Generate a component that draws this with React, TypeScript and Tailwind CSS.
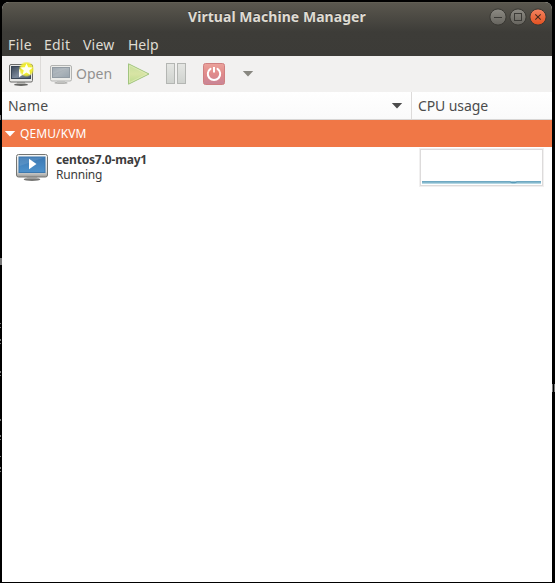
import React from "react";

const FONT = "font-['Noto_Sans','Open_Sans',sans-serif]";

function WindowButton({ kind }: { kind: "min" | "max" | "close" }) {
  const close = kind === "close";
  const ink = close ? "#4a2a1c" : "#3c3b37";
  return (
    <svg width="18" height="18" viewBox="0 0 18 18">
      <defs>
        <linearGradient id={"wb-" + kind} x1="0" y1="0" x2="0" y2="1">
          <stop offset="0" stopColor={close ? "#f48462" : "#8d8b84"} />
          <stop offset="1" stopColor={close ? "#e2501f" : "#65635d"} />
        </linearGradient>
      </defs>
      <circle cx="9" cy="9" r="8.1" fill={"url(#wb-" + kind + ")"} stroke="#393833" strokeWidth="1" />
      {kind === "min" && <path d="M5 9.5h8" stroke={ink} />}
      {kind === "max" && <rect x="5.5" y="5.5" width="7" height="7" fill="none" stroke={ink} />}
      {close && <path d="M6.3 6.3l5.4 5.4M11.7 6.3l-5.4 5.4" stroke={ink} strokeWidth="1.1" />}
    </svg>
  );
}

function NewVmIcon() {
  return (
    <svg width="26" height="25" viewBox="0 0 26 25">
      <defs>
        <linearGradient id="nv-screen" x1="0" y1="0" x2="1" y2="1">
          <stop offset="0" stopColor="#3a4656" />
          <stop offset="0.55" stopColor="#7b899b" />
          <stop offset="1" stopColor="#43546a" />
        </linearGradient>
        <radialGradient id="nv-glow">
          <stop offset="0.5" stopColor="#f5f12c" />
          <stop offset="0.75" stopColor="#f0ec35" stopOpacity="0.9" />
          <stop offset="1" stopColor="#eeea50" stopOpacity="0" />
        </radialGradient>
      </defs>
      <ellipse cx="13" cy="22.7" rx="7" ry="1.3" fill="#666664" />
      <path d="M9 20h8v2H9z" fill="#b7b7b4" />
      <rect x="1.5" y="2.5" width="23" height="17.5" rx="1.5" fill="#e8e8e6" stroke="#6b6b69" />
      <rect x="3.5" y="4.5" width="19" height="12" fill="url(#nv-screen)" stroke="#3a4656" />
      <path d="M11 7l6 4.3-6 4z" fill="#fff" />
      <circle cx="18.5" cy="7.2" r="8" fill="url(#nv-glow)" />
      <path d="M18.5 1.5l1.7 3.8 4.6.3-3.5 3 1.2 4.4-4-2.4-4 2.4 1.2-4.4-3.5-3 4.6-.3z" fill="#fffff1" />
    </svg>
  );
}

function OpenIcon() {
  return (
    <svg width="24" height="24" viewBox="0 0 24 24">
      <defs>
        <linearGradient id="op-screen" x1="0" y1="0" x2="1" y2="1">
          <stop offset="0" stopColor="#929da7" />
          <stop offset="0.5" stopColor="#adb5bb" />
          <stop offset="1" stopColor="#98a4ae" />
        </linearGradient>
      </defs>
      <ellipse cx="12" cy="20.9" rx="6.6" ry="1.1" fill="#b3b3b1" />
      <path d="M8 19h8v1.5H8z" fill="#d0d0ce" />
      <rect x="1.5" y="3.5" width="21" height="15.5" rx="1.5" fill="#ecece9" stroke="#b2b3b1" />
      <rect x="3.5" y="5.5" width="17" height="10" fill="url(#op-screen)" stroke="#929ba3" />
      <path d="M4 6h15L4 12z" fill="#fff" opacity="0.12" />
    </svg>
  );
}

function VmIcon() {
  return (
    <svg width="34" height="30" viewBox="0 0 34 30">
      <defs>
        <linearGradient id="vm-case" x1="0" y1="0" x2="0" y2="1">
          <stop offset="0" stopColor="#f6f6f5" />
          <stop offset="0.75" stopColor="#dcdcda" />
          <stop offset="1" stopColor="#9b9b99" />
        </linearGradient>
        <linearGradient id="vm-screen" x1="0" y1="0" x2="0" y2="1">
          <stop offset="0" stopColor="#3b78b3" />
          <stop offset="1" stopColor="#4e92cc" />
        </linearGradient>
      </defs>
      <ellipse cx="17" cy="26.4" rx="8.3" ry="1.6" fill="#777775" />
      <path d="M12 24h10l1 1.6H11z" fill="#c5c5c3" />
      <rect x="1.5" y="1.5" width="31" height="22.5" rx="2" fill="url(#vm-case)" stroke="#747572" />
      <rect x="4" y="4" width="26" height="15.5" fill="url(#vm-screen)" stroke="#3c78ae" />
      <path d="M4.5 4.5h25L4.5 13z" fill="#fff" opacity="0.1" />
      <path d="M14 5.8l7.5 5.2L14 16.3z" fill="#fff" />
    </svg>
  );
}

function PlayIcon() {
  return (
    <svg width="24" height="24" viewBox="0 0 24 24">
      <defs>
        <linearGradient id="pl" x1="0" y1="0" x2="0" y2="1">
          <stop offset="0" stopColor="#c6df9e" />
          <stop offset="0.5" stopColor="#d8e4a4" />
          <stop offset="1" stopColor="#badb8c" />
        </linearGradient>
      </defs>
      <path d="M1.5 1.8v20.4L22 12z" fill="url(#pl)" stroke="#a1c47f" />
      <path d="M2.5 3.4v17.2L19.8 12z" fill="none" stroke="#e2edba" strokeWidth=".7" />
    </svg>
  );
}

function PauseIcon() {
  return (
    <svg width="22" height="22" viewBox="0 0 22 22">
      <defs>
        <linearGradient id="pa" x1="0" y1="0" x2="0" y2="1">
          <stop offset="0" stopColor="#e5e6e3" />
          <stop offset="1" stopColor="#cfd2ce" />
        </linearGradient>
      </defs>
      <rect x="1.5" y=".5" width="8" height="20" fill="url(#pa)" stroke="#b4b6b3" />
      <rect x="12.5" y=".5" width="8" height="20" fill="url(#pa)" stroke="#b4b6b3" />
    </svg>
  );
}

function PowerIcon() {
  return (
    <svg width="22" height="22" viewBox="0 0 22 22">
      <defs>
        <linearGradient id="pw" x1="0" y1="0" x2="0" y2="1">
          <stop offset="0" stopColor="#eba39b" />
          <stop offset="0.5" stopColor="#e18a8a" />
          <stop offset="1" stopColor="#c88597" />
        </linearGradient>
      </defs>
      <rect x=".5" y=".5" width="21" height="21" rx="2" fill="url(#pw)" stroke="#cf7f80" />
      <path d="M7.5 5.8a6.2 6.2 0 1 0 7 0" fill="none" stroke="#fff" strokeWidth="2" strokeLinecap="round" />
      <path d="M11 4v5.5" stroke="#fff" strokeWidth="2" />
    </svg>
  );
}

function Caret({ className }: { className: string }) {
  return (
    <svg width="12" height="6" viewBox="0 0 12 6" className={className}>
      <path d="M.8 0h10.4L6 5.5z" fill="currentColor" />
    </svg>
  );
}

// Slivers of the terminal text that show beside the window.
function Backdrop() {
  return (
    <svg width="555" height="583" viewBox="0 0 555 583" className="absolute top-0 left-0" fill="#777">
      <rect x="0" y="115" width="1" height="5" />
      <rect x="0" y="258" width="2" height="7" />
      <path d="M0 323h1v1H0zM0 327h1v1H0zM0 339h1v2H0zM0 343h1v1H0zM0 371h1v2H0zM0 375h1v1H0zM0 419h1v2H0zM0 435h1v2H0zM0 439h1v1H0zM0 456h1v1H0zM0 467h1v2H0zM0 471h1v1H0z" />
      <rect x="552" y="384" width="1" height="8" />
      <rect x="554" y="384" width="1" height="8" />
    </svg>
  );
}

export default function App() {
  return (
    <div className={"relative h-[583px] w-[555px] overflow-hidden bg-black pt-[2px] pl-[2px] " + FONT}>
      <Backdrop />
      <div className="relative flex h-[580px] w-[550px] flex-col overflow-hidden rounded-t-[7px] bg-white whitespace-nowrap">
        <header className="h-[54px] shrink-0 bg-[linear-gradient(to_bottom,#69665a_0px,#5a574e_1px,#3d3c38_30px,#3c3b37_54px)]">
          <div className="flex h-[30px] items-center pr-[5px] pl-[186px]">
            <h1 className="text-[14px] leading-[30px] font-bold tracking-[0.05px] text-[#dfdbd2] [text-shadow:0_-1px_0_#333]">Virtual Machine Manager</h1>
            <div className="ml-auto flex gap-[2px]">
              <WindowButton kind="min" />
              <WindowButton kind="max" />
              <WindowButton kind="close" />
            </div>
          </div>
          <nav className="flex h-6 pl-[6px] text-[14px] leading-[26px] text-[#dfdbd2]">
            <span className="w-9 tracking-[0.4px]">File</span>
            <span className="w-[39px] tracking-[0.3px]">Edit</span>
            <span className="w-[45px] tracking-[0.2px]">View</span>
            <span>Help</span>
          </nav>
        </header>

        <div className="flex h-9 shrink-0 items-center bg-[#f2f1f0] pl-[6px]">
          <NewVmIcon />
          <div className="ml-[6px] h-9 w-px bg-[#dddbd9]" />
          <div className="ml-[8px] flex items-center gap-[3px]">
            <OpenIcon />
            <span className="-mt-px w-[36px] text-[14px] text-[#929190]">Open</span>
          </div>
          <div className="ml-[15px]"><PlayIcon /></div>
          <div className="ml-[14px]"><PauseIcon /></div>
          <div className="ml-[16px]"><PowerIcon /></div>
          <Caret className="ml-[17px] text-[#888780]" />
        </div>

        <div className="flex h-7 shrink-0 border-b border-[#d8d6d5] bg-linear-to-b from-white to-[#fafafa] text-[14px] leading-[27px] text-[#4c4c4c]">
          <div className="flex w-[410px] items-center justify-between border-r border-[#dddbda] pr-2 pl-[6px]">
            <span className="tracking-[0.2px]">Name</span>
            <Caret className="text-[#4c4c4c]" />
          </div>
          <span className="pl-[6px] tracking-[-0.1px]">CPU usage</span>
        </div>

        <div className="flex h-[27px] shrink-0 items-center bg-[#f07746] pl-[2px] text-white">
          <Caret className="text-white" />
          <span className="ml-1 text-[12px] tracking-[0.1px]">QEMU/KVM</span>
        </div>

        <div className="flex h-[41px] items-start pl-[13px]">
          <div className="mt-[6px]"><VmIcon /></div>
          <div className="mt-[5px] ml-[7px] w-[363px] text-[12px] leading-[15px] text-[#3c3c3c]">
            <div className="font-bold tracking-[-0.17px]">centos7.0-may1</div>
            <div className="tracking-[-0.2px]">Running</div>
          </div>
          <svg width="125" height="39" viewBox="0 0 125 39" className="mt-px">
            <rect x=".5" y=".5" width="124" height="38" fill="#fff" stroke="#f1f0f0" />
            <rect x="1.5" y="1.5" width="122" height="36" fill="none" stroke="#dddbdb" />
            <path d="M3 34.5h119" fill="none" stroke="#b3d6e2" strokeWidth="3" />
            <path d="M3 33.9h88l2 .6h3l2-.6h24" fill="none" stroke="#599ab8" strokeWidth="1.3" />
          </svg>
        </div>
      </div>
    </div>
  );
}
